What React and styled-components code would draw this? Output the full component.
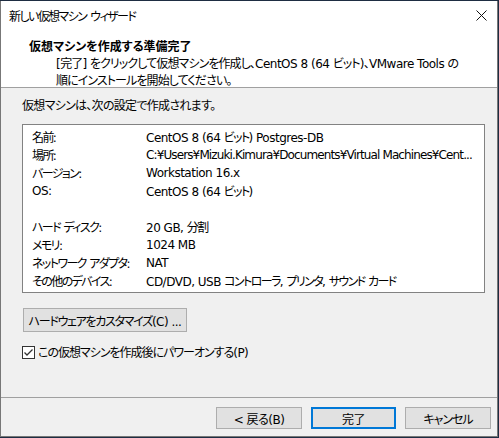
import React from 'react'
import styled, { createGlobalStyle } from 'styled-components'

const GlobalStyle = createGlobalStyle`
  html, body {
    margin: 0;
    padding: 0;
    background: #1e2d42;
  }
  body {
    padding-top: 1px;
    font-family: "DejaVu Sans", "Noto Sans CJK JP", sans-serif;
    font-size: 12px;
    letter-spacing: -0.5px;
    color: #000;
  }
`

const Window = styled.div`
  box-sizing: border-box;
  width: 498px;
  height: 436px;
  border: 1px solid #777;
  border-top: none;
  background: #f0f0f0;
  display: flex;
  flex-direction: column;
  font-feature-settings: "palt";
`

// Japanese runs are drawn tighter, the way Meiryo UI sets kana
const Ja = styled.span`
  font-family: "Noto Sans CJK JP", sans-serif;
  letter-spacing: ${p => p.$ls || -1.2}px;
  word-spacing: ${p => p.$ws ?? 3}px;
`

const TitleBar = styled.div`
  height: 29px;
  background: #fff;
  display: flex;
  align-items: center;
  justify-content: space-between;
  padding: 0 9px 0 8px;
  line-height: 29px;
`

const Close = styled.svg`
  width: 11px;
  height: 11px;
  margin-right: 1px;
`

const Header = styled.div`
  background: #fff;
  height: 49px;
  border-bottom: 1px solid #a0a0a0;
  padding-top: 8px;
  box-sizing: content-box;
`

const Heading = styled.div`
  font-family: "Noto Sans CJK JP", sans-serif;
  font-weight: bold;
  letter-spacing: 0;
  padding-left: 28px;
  line-height: 16px;
`

const Desc = styled.div`
  padding-left: 55px;
  line-height: 15px;
  margin-top: 1px;
`

const Body = styled.div`
  flex: 1;
  padding: 9px 12px 0 21px;
  display: flex;
  flex-direction: column;
`

const Intro = styled.div`
  line-height: 16px;
`

const Summary = styled.div`
  margin-top: 10px;
  width: 463px;
  height: 169px;
  box-sizing: border-box;
  background: #fff;
  border: 1px solid #828282;
  padding: 3px 0 0 9px;
`

const Row = styled.div`
  display: grid;
  grid-template-columns: 114px 1fr;
  height: 18px;
  line-height: 18px;
  white-space: nowrap;
`

const Value = styled.span`
  letter-spacing: ${p => p.$ls ?? -0.5}px;
`

const Button = styled.button`
  box-sizing: border-box;
  height: ${p => p.$h || 22}px;
  width: ${p => p.$w}px;
  padding: 0;
  white-space: nowrap;
  font: inherit;
  letter-spacing: inherit;
  font-feature-settings: "palt";
  color: #000;
  background: #e1e1e1;
  border: ${p => (p.$primary ? '2px solid #0078d7' : '1px solid #adadad')};
`

const Customize = styled(Button)`
  margin-top: 15px;
  margin-left: 1px;
`

const CheckRow = styled.label`
  margin-top: 12px;
  display: flex;
  align-items: center;
  gap: 3px;
  line-height: 16px;
`

const Box = styled.span`
  width: 13px;
  height: 13px;
  box-sizing: border-box;
  border: 1px solid #333;
  background: #fff;
  display: flex;
  align-items: center;
  justify-content: center;
`

const Footer = styled.div`
  border-top: 1px solid #a0a0a0;
  height: 39px;
  display: flex;
  justify-content: flex-end;
  gap: 9px;
  padding: 9px 6px 0 0;
  box-sizing: border-box;
`

// split a string into Latin and Japanese runs
const mix = (text, ls, ws) =>
  text.split(/([^\x00-\x7f¥]+)/).map((part, i) =>
    i % 2 ? <Ja key={i} $ls={ls} $ws={ws}>{part}</Ja> : part
  )

const rows = [
  ['名前:', 'CentOS 8 (64 ビット) Postgres-DB'],
  ['場所:', 'C:¥Users¥Mizuki.Kimura¥Documents¥Virtual Machines¥Cent...', -0.88],
  ['バージョン:', 'Workstation 16.x'],
  ['OS:', 'CentOS 8 (64 ビット)'],
  ['', ''],
  ['ハード ディスク:', '20 GB, 分割'],
  ['メモリ:', '1024 MB'],
  ['ネットワーク アダプタ:', 'NAT'],
  ['その他のデバイス:', 'CD/DVD, USB コントローラ, プリンタ, サウンド カード'],
]

export default function App() {
  return (
    <>
      <GlobalStyle />
      <Window>
        <TitleBar>
          <Ja $ls={-1.6}>新しい仮想マシン ウィザード</Ja>
          <Close viewBox="0 0 11 11">
            <path d="M0.5 0.5 L10.5 10.5 M10.5 0.5 L0.5 10.5" stroke="#111" strokeWidth="1" />
          </Close>
        </TitleBar>
        <Header>
          <Heading>仮想マシンを作成する準備完了</Heading>
          <Desc>
            {mix('[完了] をクリックして仮想マシンを作成し、CentOS 8 (64 ビット)、VMware Tools の', -0.9)}
            <br />
            {mix('順にインストールを開始してください。', -0.9)}
          </Desc>
        </Header>
        <Body>
          <Intro>{mix('仮想マシンは、次の設定で作成されます。', -0.7)}</Intro>
          <Summary>
            {rows.map(([k, v, ls], i) => (
              <Row key={i}>
                <span>{mix(k, -1.6, 1)}</span>
                <Value $ls={ls}>{mix(v, -1.6, 2)}</Value>
              </Row>
            ))}
          </Summary>
          <div>
            <Customize $w={164} $h={24}>{mix('ハードウェアをカスタマイズ(C) ...', -1.3)}</Customize>
          </div>
          <CheckRow>
            <Box>
              <svg width="11" height="11" viewBox="0 0 11 11">
                <path d="M1.5 5.5 L4 8 L9.5 2.5" fill="none" stroke="#333" strokeWidth="1.3" />
              </svg>
            </Box>
            <span>{mix('この仮想マシンを作成後にパワーオンする(P)', -1)}</span>
          </CheckRow>
        </Body>
        <Footer>
          <Button $w={86}>{mix('< 戻る(B)', -0.5)}</Button>
          <Button $w={85} $primary>完了</Button>
          <Button $w={86}>{mix('キャンセル', -1)}</Button>
        </Footer>
      </Window>
    </>
  )
}
